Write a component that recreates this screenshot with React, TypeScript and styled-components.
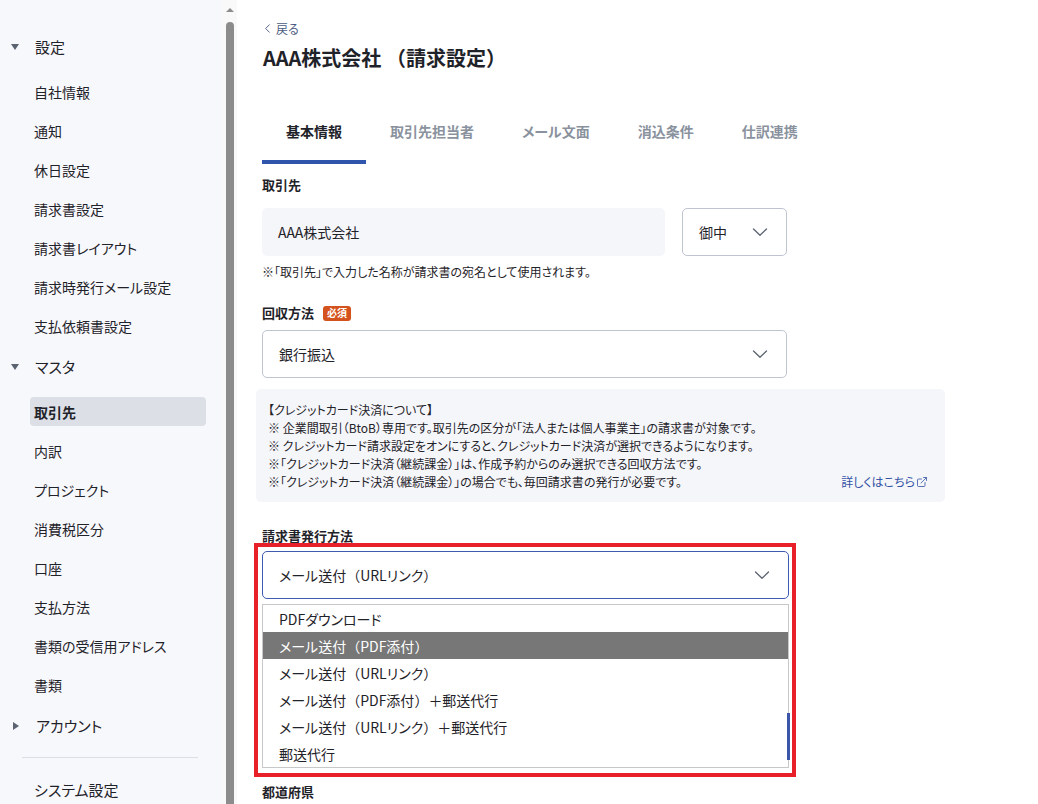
import React from 'react'
import styled, { createGlobalStyle } from 'styled-components'
import { ChevronLeft, ExternalLink } from 'lucide-react'

const GlobalStyle = createGlobalStyle`
  html, body {
    margin: 0;
    padding: 0;
    height: 804px;
    overflow: hidden;
    background: #ffffff;
  }
  body {
    font-family: "Noto Sans CJK JP", "Noto Sans", "Liberation Sans", sans-serif;
    font-feature-settings: "palt";
    color: #1f2329;
  }
  * { box-sizing: border-box; }
`

const sections = [
  {
    title: '設定',
    open: true,
    items: ['自社情報', '通知', '休日設定', '請求書設定', '請求書レイアウト', '請求時発行メール設定', '支払依頼書設定'],
  },
  {
    title: 'マスタ',
    open: true,
    items: ['取引先', '内訳', 'プロジェクト', '消費税区分', '口座', '支払方法', '書類の受信用アドレス', '書類'],
  },
  { title: 'アカウント', open: false, items: [] as string[] },
]

const tabs = ['基本情報', '取引先担当者', 'メール文面', '消込条件', '仕訳連携']

const issueOptions = [
  'PDFダウンロード',
  'メール送付（PDF添付）',
  'メール送付（URLリンク）',
  'メール送付（PDF添付）＋郵送代行',
  'メール送付（URLリンク）＋郵送代行',
  '郵送代行',
]

// keep full-width brackets wide while the rest of the text uses proportional kana
const withWideParens = (text: string) =>
  text.split(/([（）])/).map((part, i) =>
    part === '（' || part === '）' ? <WideParen key={i}>{part}</WideParen> : part
  )

function Chevron() {
  return (
    <svg width="16" height="10" viewBox="0 0 16 10" fill="none">
      <path d="M1.5 2 L8 8.3 L14.5 2" stroke="#5b6370" strokeWidth="1.3" strokeLinecap="round" strokeLinejoin="round" />
    </svg>
  )
}

export default function App() {
  return (
    <>
      <GlobalStyle />
      <Page>
        <Sidebar>
          {sections.map((s) => (
            <Section key={s.title}>
              <SectionHeader>
                <Caret open={s.open} />
                {s.title}
              </SectionHeader>
              {s.items.length > 0 && (
                <ItemList>
                  {s.items.map((it) => (
                    <NavItem key={it} active={it === '取引先'}>
                      {it}
                    </NavItem>
                  ))}
                </ItemList>
              )}
            </Section>
          ))}
          <Divider />
          <SectionHeader plain>システム設定</SectionHeader>
        </Sidebar>

        <ScrollTrack>
          <ScrollArrow />
          <ScrollThumb />
        </ScrollTrack>

        <Main>
          <BackLink>
            <ChevronLeft size={15} strokeWidth={1.5} />
            戻る
          </BackLink>
          <Title>{withWideParens('AAA株式会社 （請求設定）')}</Title>

          <TabList>
            {tabs.map((t, i) => (
              <Tab key={t} active={i === 0}>
                {t}
              </Tab>
            ))}
          </TabList>

          <Form>
            <Label style={{ marginTop: 13 }}>取引先</Label>
            <Row>
              <TextInput>AAA株式会社</TextInput>
              <Select width={105}>
                御中
                <Chevron />
              </Select>
            </Row>
            <Note>※「取引先」で入力した名称が請求書の宛名として使用されます。</Note>

            <Label style={{ marginTop: 24 }}>
              回収方法<Badge>必須</Badge>
            </Label>
            <Select>
              銀行振込
              <Chevron />
            </Select>

            <InfoBox>
              <div>【クレジットカード決済について】</div>
              <div>※ 企業間取引（BtoB）専用です。取引先の区分が「法人または個人事業主」の請求書が対象です。</div>
              <div>※ クレジットカード請求設定をオンにすると、クレジットカード決済が選択できるようになります。</div>
              <div>※「クレジットカード決済（継続課金）」は、作成予約からのみ選択できる回収方法です。</div>
              <InfoLast>
                <span>※「クレジットカード決済（継続課金）」の場合でも、毎回請求書の発行が必要です。</span>
                <MoreLink>
                  詳しくはこちら
                  <ExternalLink size={12} strokeWidth={1.6} />
                </MoreLink>
              </InfoLast>
            </InfoBox>

            <Label style={{ marginTop: 26, marginBottom: 0 }}>請求書発行方法</Label>
            <Highlight>
              <Select focused>
                <span>{withWideParens('メール送付（URLリンク）')}</span>
                <Chevron />
              </Select>
              <OptionList>
                {issueOptions.map((o, i) => (
                  <Option key={o} selected={i === 1}>
                    {withWideParens(o)}
                  </Option>
                ))}
                <ListScroll />
              </OptionList>
            </Highlight>

            <Label style={{ marginTop: 7 }}>都道府県</Label>
          </Form>
        </Main>
      </Page>
    </>
  )
}

const Page = styled.div`
  display: flex;
  height: 804px;
  overflow: hidden;
`

const Sidebar = styled.nav`
  width: 222px;
  flex-shrink: 0;
  background: #f7f8fc;
  padding-top: 27px;
`

const Section = styled.div`
  & + & {
    margin-top: 2px;
  }
`

const SectionHeader = styled.div<{ plain?: boolean }>`
  display: flex;
  align-items: center;
  height: 39px;
  padding-left: ${(p) => (p.plain ? '34px' : '11px')};
  font-size: 15px;
  color: #1f2329;
`

const Caret = styled.span<{ open: boolean }>`
  width: 0;
  height: 0;
  margin-right: 16px;
  margin-left: ${(p) => (p.open ? '0' : '2px')};
  border-style: solid;
  ${(p) =>
    p.open
      ? `border-width: 6px 4.5px 0 4.5px; border-color: #5b6370 transparent transparent transparent;`
      : `border-width: 4.5px 0 4.5px 6px; border-color: transparent transparent transparent #5b6370; margin-right: 17px;`}
`

const ItemList = styled.div`
  display: flex;
  flex-direction: column;
  margin-top: 6px;
`

const NavItem = styled.div<{ active?: boolean }>`
  display: flex;
  align-items: center;
  width: 176px;
  height: 29px;
  margin: 5px 0 5px 30px;
  padding-left: 4px;
  border-radius: 4px;
  font-size: 14px;
  background: ${(p) => (p.active ? '#dcdfe6' : 'transparent')};
  font-weight: ${(p) => (p.active ? 700 : 400)};
  color: #1f2329;
`

const Divider = styled.div`
  height: 1px;
  margin: 12px 24px 12px 22px;
  background: #dcdfe5;
`

const ScrollTrack = styled.div`
  width: 15px;
  flex-shrink: 0;
  background: #f9f9f9;
  display: flex;
  flex-direction: column;
  align-items: center;
  padding-top: 8px;
`

const ScrollArrow = styled.div`
  width: 0;
  height: 0;
  border-style: solid;
  border-width: 0 4px 4px 4px;
  border-color: transparent transparent #8c8c8c transparent;
`

const ScrollThumb = styled.div`
  margin-top: 10px;
  width: 8px;
  flex: 1;
  background: #8c8c8c;
  border-radius: 4px 4px 0 0;
`

const Main = styled.main`
  flex: 1;
  padding: 18px 0 0 25px;
`

const BackLink = styled.a`
  display: flex;
  align-items: center;
  gap: 1px;
  height: 20px;
  font-size: 12px;
  color: #4b5b82;
  margin-left: -2px;
`

const Title = styled.h1`
  margin: 6px 0 0 1px;
  font-size: 20px;
  line-height: 28px;
  font-weight: 700;
  color: #1f2329;
`

const WideParen = styled.span`
  font-feature-settings: normal;
`

const TabList = styled.div`
  display: flex;
  margin-top: 37px;
`

const Tab = styled.div<{ active?: boolean }>`
  padding: 12px 24px 19px;
  line-height: 20px;
  font-size: 14px;
  font-weight: 700;
  color: ${(p) => (p.active ? '#1f2329' : '#8a929e')};
  border-bottom: 4px solid ${(p) => (p.active ? '#2f55ad' : 'transparent')};
`

const Form = styled.div`
  width: 525px;
  display: flex;
  flex-direction: column;
`

const Label = styled.div`
  display: flex;
  align-items: center;
  font-size: 13px;
  line-height: 16px;
  font-weight: 700;
  color: #1f2329;
  margin-bottom: 9px;
`

const Badge = styled.span`
  display: inline-flex;
  align-items: center;
  height: 15px;
  margin-left: 9px;
  padding: 0 4px;
  border-radius: 3px;
  background: #d4521d;
  color: #ffffff;
  font-size: 10px;
  font-weight: 700;
`

const Row = styled.div`
  display: flex;
  gap: 17px;
  margin-top: 6px;
`

const TextInput = styled.div`
  flex: 1;
  height: 48px;
  display: flex;
  align-items: center;
  padding-left: 16px;
  background: #f5f6fa;
  border-radius: 5px;
  font-size: 14px;
`

const Select = styled.div<{ width?: number; focused?: boolean }>`
  width: ${(p) => (p.width ? `${p.width}px` : '100%')};
  height: 48px;
  flex-shrink: 0;
  display: flex;
  align-items: center;
  justify-content: space-between;
  padding: 0 18px 0 16px;
  border: 1px solid ${(p) => (p.focused ? '#3d5bb3' : '#bfc5d0')};
  border-radius: 5px;
  background: #ffffff;
  font-size: 14px;
`

const Note = styled.div`
  margin-top: 7px;
  font-size: 12px;
  line-height: 18px;
`

const InfoBox = styled.div`
  width: 689px;
  margin: 11px 0 0 -6px;
  padding: 12px 17px 11px 12px;
  background: #f5f6fa;
  border-radius: 5px;
  font-size: 12px;
  line-height: 18px;
`

const InfoLast = styled.div`
  display: flex;
  justify-content: space-between;
`

const MoreLink = styled.a`
  display: inline-flex;
  align-items: center;
  gap: 1px;
  color: #3453a5;
`

const Highlight = styled.div`
  width: 542px;
  margin: -1px 0 0 -8px;
  padding: 4px 3px 5px 4px;
  border: 4px solid #e8202a;
  display: flex;
  flex-direction: column;
`

const OptionList = styled.div`
  position: relative;
  margin-top: 5px;
  border: 1px solid #c8c8c8;
  background: #ffffff;
`

const Option = styled.div<{ selected?: boolean }>`
  height: 27px;
  display: flex;
  align-items: center;
  padding-left: 16px;
  font-size: 14px;
  background: ${(p) => (p.selected ? '#777777' : '#ffffff')};
  color: ${(p) => (p.selected ? '#ffffff' : '#1f2329')};
`

const ListScroll = styled.div`
  position: absolute;
  right: -2px;
  top: 108px;
  width: 3px;
  height: 47px;
  background: #3b55a8;
`
